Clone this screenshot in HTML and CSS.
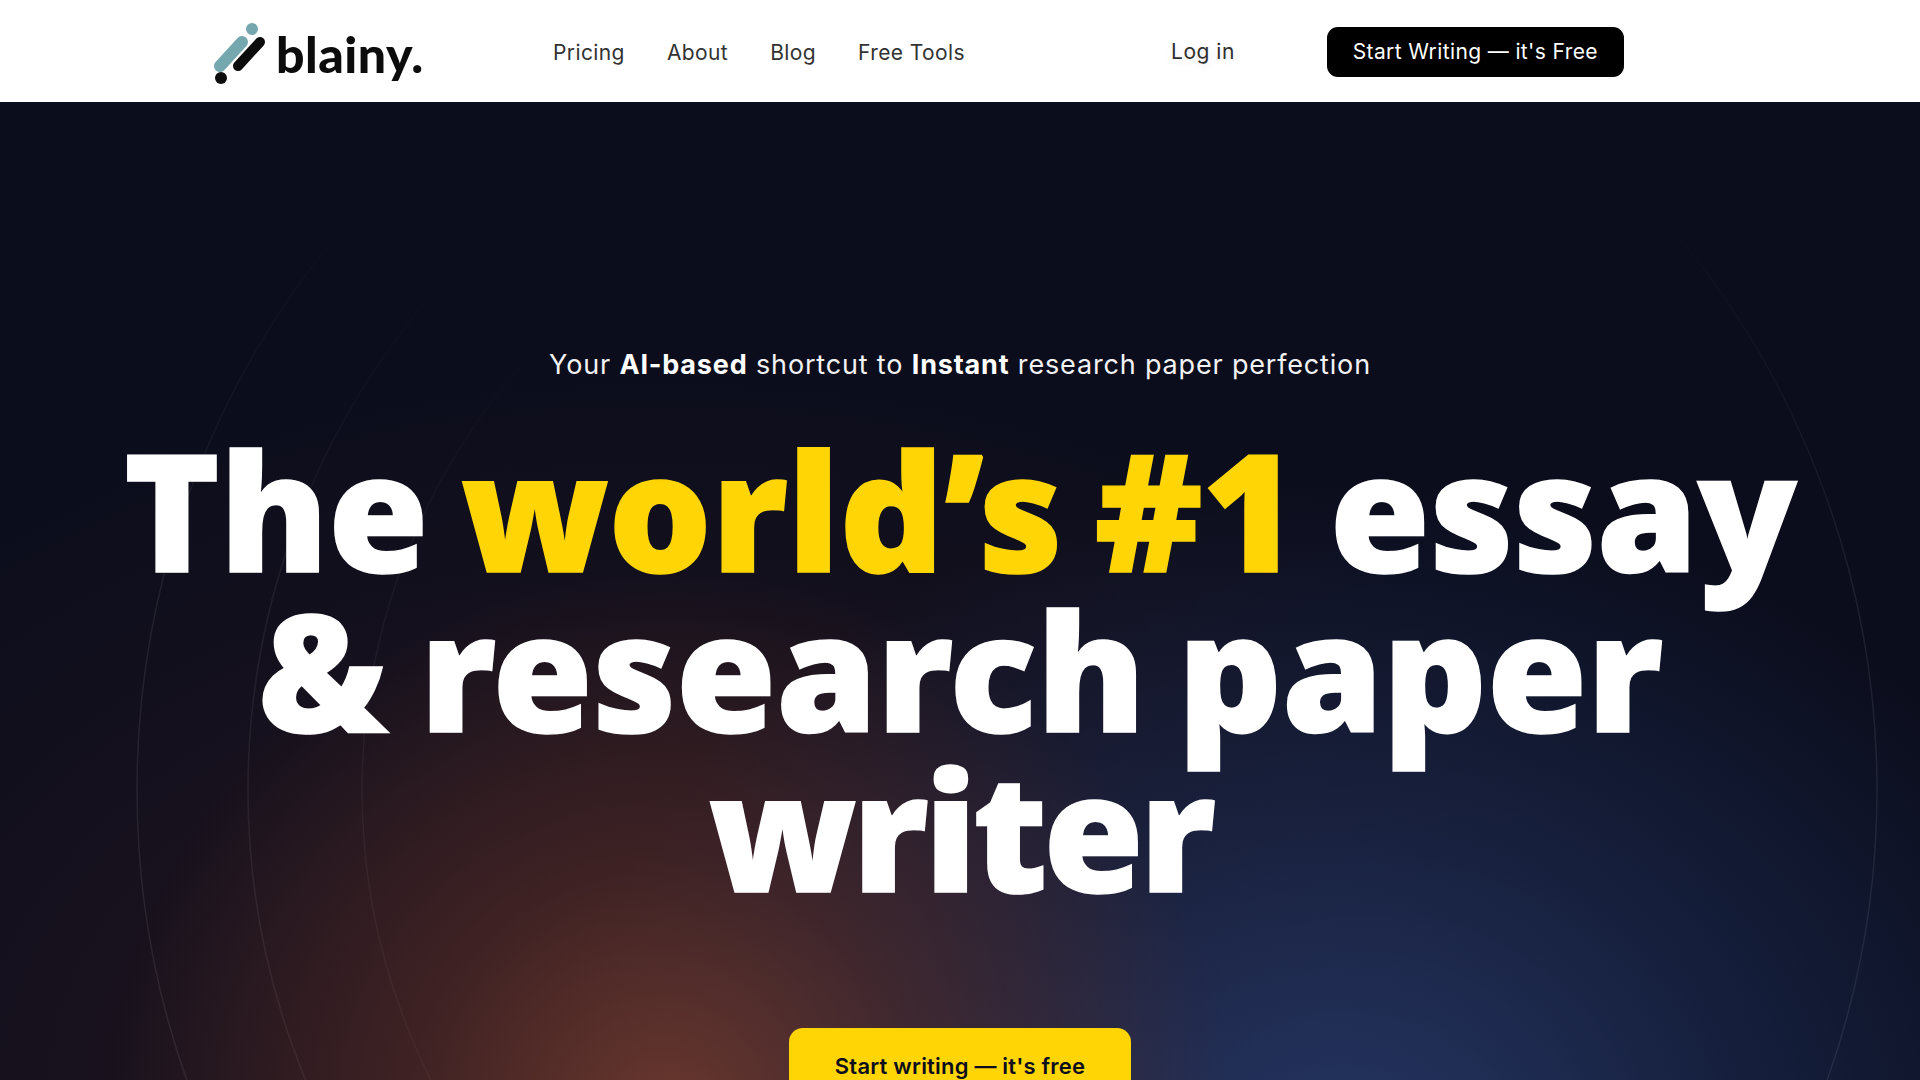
FILE: index.html
```html
<!DOCTYPE html>
<html lang="en">
<head>
<meta charset="utf-8">
<title>Blainy</title>
<link rel="stylesheet" href="styles.css">
</head>
<body>
<header class="topbar">
  <a class="logo" href="#">
    <svg class="logo-mark" viewBox="0 0 60 70" width="60" height="70" aria-hidden="true">
      <line x1="8" y1="50" x2="30" y2="26" stroke="#74a8ae" stroke-width="12" stroke-linecap="round"/>
      <line x1="26" y1="50" x2="48" y2="26" stroke="#0c0c0c" stroke-width="10" stroke-linecap="round"/>
      <circle cx="40" cy="13" r="6" fill="#74a8ae"/>
      <circle cx="9" cy="62" r="6" fill="#0c0c0c"/>
    </svg>
    <span class="logo-text">blainy.</span>
  </a>
  <nav class="links">
    <a href="#">Pricing</a>
    <a href="#">About</a>
    <a href="#">Blog</a>
    <a href="#">Free Tools</a>
  </nav>
  <a class="login" href="#">Log in</a>
  <a class="cta-dark" href="#">Start Writing — it's Free</a>
</header>
<main class="hero">
  <svg class="rings" viewBox="0 0 1920 978" aria-hidden="true">
    <defs>
      <linearGradient id="fade" gradientUnits="userSpaceOnUse" x1="130" y1="0" x2="640" y2="0">
        <stop offset="0" stop-color="#fff" stop-opacity=".09"/>
        <stop offset="1" stop-color="#fff" stop-opacity="0"/>
      </linearGradient>
    </defs>
    <circle cx="1007" cy="688" r="870" fill="none" stroke="#fff" stroke-opacity=".08" stroke-width="1.5"/>
    <circle cx="1007" cy="688" r="759" fill="none" stroke="url(#fade)" stroke-width="1.5"/>
    <circle cx="1007" cy="688" r="645" fill="none" stroke="url(#fade)" stroke-width="1.5"/>
  </svg>
  <p class="tagline">Your <b>AI-based</b> shortcut to <b>Instant</b> research paper perfection</p>
  <h1 class="headline">The <span class="accent">world’s #1</span> essay<br>&amp; research paper<br><span class="tight">writer</span></h1>
  <a class="cta-yellow" href="#">Start writing — it's free</a>
</main>
</body>
</html>
```
FILE: styles.css
```css
* { box-sizing: border-box; }
html, body { margin: 0; height: 100%; overflow: hidden; }
body { font-family: "Inter", "Liberation Sans", sans-serif; background: #0b0d1c; }
a { text-decoration: none; color: inherit; }

.topbar {
  height: 102px;
  background: #fff;
  display: flex;
  align-items: center;
  padding-left: 212px;
}
.logo { display: flex; align-items: center; gap: 4px; width: 341px; }
.logo-mark { flex: none; margin-top: -1px; }
.logo-text {
  font-family: "Lato", sans-serif;
  font-weight: 900;
  font-size: 50px;
  line-height: 1;
  color: #0c0c0c;
  letter-spacing: .5px;
  margin-top: 6px;
}
.links { display: flex; gap: 42px; font-size: 21px; color: #333; letter-spacing: .4px; margin-top: 2px; }
.login {
  margin-left: 206px;
  font-size: 21px;
  font-weight: 400;
  letter-spacing: .5px;
  color: #2f2f2f;
  text-shadow: 0 2px 8px rgba(0,0,0,.12);
}
.cta-dark {
  margin-left: 92px;
  width: 297px;
  height: 50px;
  margin-top: 1px;
  border-radius: 11px;
  background: #000;
  color: #fff;
  font-size: 21px;
  letter-spacing: .38px;
  display: flex;
  align-items: center;
  justify-content: center;
}

.hero {
  position: relative;
  height: 978px;
  overflow: hidden;
  display: flex;
  flex-direction: column;
  align-items: center;
  background:
    radial-gradient(ellipse 560px 540px at 670px 1010px, rgba(112,58,46,.9), rgba(90,46,40,.55) 45%, rgba(60,30,30,0) 100%),
    radial-gradient(ellipse 800px 680px at 1340px 1060px, rgba(38,56,104,.95), rgba(28,44,84,.6) 50%, rgba(16,26,56,0) 100%),
    radial-gradient(ellipse 1100px 760px at 660px 1000px, rgba(70,34,34,.45), rgba(70,34,34,0) 100%),
    #0b0d1c;
}
.rings {
  position: absolute;
  inset: 0;
  width: 100%;
  height: 100%;
  -webkit-mask-image: linear-gradient(to bottom, transparent 8%, rgba(0,0,0,.35) 25%, #000 50%);
  mask-image: linear-gradient(to bottom, transparent 8%, rgba(0,0,0,.35) 25%, #000 50%);
}
.tagline {
  position: relative;
  margin: 243px 0 0;
  font-size: 27px;
  line-height: 40px;
  color: #f2f2f4;
  letter-spacing: .83px;
}
.tagline b { font-weight: 700; color: #fff; }
.headline {
  position: relative;
  margin: 44px 0 0;
  font-family: "Noto Sans", sans-serif;
  font-weight: 900;
  font-size: 163px;
  line-height: 160px;
  letter-spacing: -.7px;
  word-spacing: -9px;
  text-align: center;
  color: #fff;
  -webkit-text-stroke: 1.5px currentColor;
  white-space: nowrap;
}
.accent { color: #ffd505; }
.tight { letter-spacing: -4.5px; }
.cta-yellow {
  position: relative;
  margin-top: 119px;
  flex: none;
  width: 342px;
  height: 76px;
  border-radius: 14px;
  background: #ffd505;
  color: #0b0d1c;
  font-size: 22px;
  font-weight: 600;
  letter-spacing: .2px;
  display: flex;
  align-items: center;
  justify-content: center;
}
```
